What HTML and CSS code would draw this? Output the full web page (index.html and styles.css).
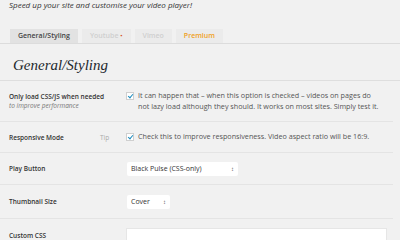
FILE: index.html
```html
<!DOCTYPE html>
<html lang="en">
<head>
  <meta charset="UTF-8" />
  <title>Lazy Load for Videos</title>
  <link rel="stylesheet" href="styles.css">
</head>
<body>
  <div class="wrap">
    <p class="intro">Speed up your site and customise your video player!</p>

    <!-- Tabs -->
    <nav class="tabs">
      <a href="#" class="tab active">General/Styling</a>
      <a href="#" class="tab muted">Youtube <span class="dot">&bull;</span></a>
      <a href="#" class="tab muted">Vimeo</a>
      <a href="#" class="tab premium">Premium</a>
    </nav>

    <h2 class="section-title">General/Styling</h2>

    <!-- Options -->
    <div class="form-table">
      <div class="row row-1">
        <div class="label">
          <strong>Only load CSS/JS when needed</strong>
          <em>to improve performance</em>
        </div>
        <div class="field">
          <label class="check">
            <span class="box"></span>
            <span class="desc">It can happen that &ndash; when this option is checked &ndash; videos on pages do<br>not lazy load although they should. It works on most sites. Simply test it.</span>
          </label>
        </div>
      </div>

      <div class="row row-2">
        <div class="label">
          <strong>Responsive Mode</strong>
          <span class="tip">Tip</span>
        </div>
        <div class="field">
          <label class="check">
            <span class="box"></span>
            <span class="desc">Check this to improve responsiveness. Video aspect ratio will be 16:9.</span>
          </label>
        </div>
      </div>

      <div class="row row-3">
        <div class="label"><strong>Play Button</strong></div>
        <div class="field">
          <div class="select select-wide">Black Pulse (CSS-only)<span class="arrows">&#8597;</span></div>
        </div>
      </div>

      <div class="row row-4">
        <div class="label"><strong>Thumbnail Size</strong></div>
        <div class="field">
          <div class="select select-small">Cover<span class="arrows">&#8597;</span></div>
        </div>
      </div>

      <div class="row last">
        <div class="label"><strong>Custom CSS</strong></div>
        <div class="field">
          <div class="textarea"></div>
        </div>
      </div>
    </div>
  </div>
</body>
</html>
```

FILE: styles.css
```css
/* ================================
   Base
================================= */
* {
  margin: 0;
  padding: 0;
  box-sizing: border-box;
}

body {
  background: #f1f1f1;
  font-family: "Open Sans", sans-serif;
  font-size: 7px;
  color: #444;
  overflow: hidden;
}

a {
  text-decoration: none;
  color: inherit;
}

.wrap {
  width: 400px;
  height: 240px;
  overflow: hidden;
}

/* ================================
   Intro + Tabs
================================= */
.intro {
  font-style: italic;
  font-size: 8px;
  line-height: 10px;
  padding-left: 9px;
  color: #333;
}

.tabs {
  display: flex;
  gap: 4px;
  margin-top: 19px;
  padding-left: 10px;
  border-bottom: 1px solid #dcdcdc;
}

.tab {
  background: #ebebeb;
  font-weight: 600;
  line-height: 14px;
  padding: 0 8px;
  color: #cfcfcf;
}

.tab.active {
  background: #e2e2e2;
  color: #444;
}

.tab.premium {
  color: #f0a024;
}

.dot {
  color: #d54e21;
  font-size: 6px;
}

/* ================================
   Section heading
================================= */
.section-title {
  font-family: "Liberation Serif", serif;
  font-style: italic;
  font-weight: normal;
  font-size: 15px;
  line-height: 20px;
  color: #23282d;
  padding: 11px 0 0 13px;
  height: 37px;
  border-bottom: 1px solid #dedede;
}

/* ================================
   Options table
================================= */
.form-table {
  width: 393px;
}

.row {
  display: flex;
  align-items: center;
  border-bottom: 1px solid #e4e4e4;
}

.row-1 { height: 41px; }
.row-2 { height: 31px; }
.row-3 { height: 32px; }
.row-4 { height: 34px; }

.row.last {
  align-items: flex-start;
  padding-top: 9px;
  border-bottom: none;
}

.row.last .label {
  padding-top: 3px;
}

.label {
  width: 126px;
  padding-left: 9px;
  display: flex;
  flex-direction: column;
  position: relative;
  line-height: 9px;
  font-size: 6.5px;
}

.label strong {
  font-weight: 600;
  color: #333;
}

.label em {
  color: #777;
}

.tip {
  position: absolute;
  left: 100px;
  top: 0;
  color: #aaa;
}

.field {
  flex: 1;
  color: #555;
}

.check {
  display: flex;
  align-items: flex-start;
  line-height: 11.5px;
  font-size: 7.2px;
  white-space: nowrap;
}

.box {
  flex: none;
  position: relative;
  width: 8px;
  height: 8px;
  margin: 2px 4px 0 0;
  background: #fff;
  border: 1px solid #cfcfcf;
}

.box::after {
  content: "";
  position: absolute;
  left: 2px;
  top: 0;
  width: 2px;
  height: 4px;
  border-right: 1.5px solid #1e8cbe;
  border-bottom: 1.5px solid #1e8cbe;
  transform: rotate(40deg);
}

.select {
  display: inline-flex;
  align-items: center;
  justify-content: space-between;
  background: #fff;
  height: 14px;
  padding: 0 4px;
  margin-left: 1px;
  color: #333;
  border-radius: 2px;
}

.select-wide {
  width: 111px;
}

.select-small {
  width: 43px;
}

.arrows {
  font-size: 6px;
  color: #555;
}

.textarea {
  width: 261px;
  height: 30px;
  background: #fff;
  border: 1px solid #e6e6e6;
}
```
